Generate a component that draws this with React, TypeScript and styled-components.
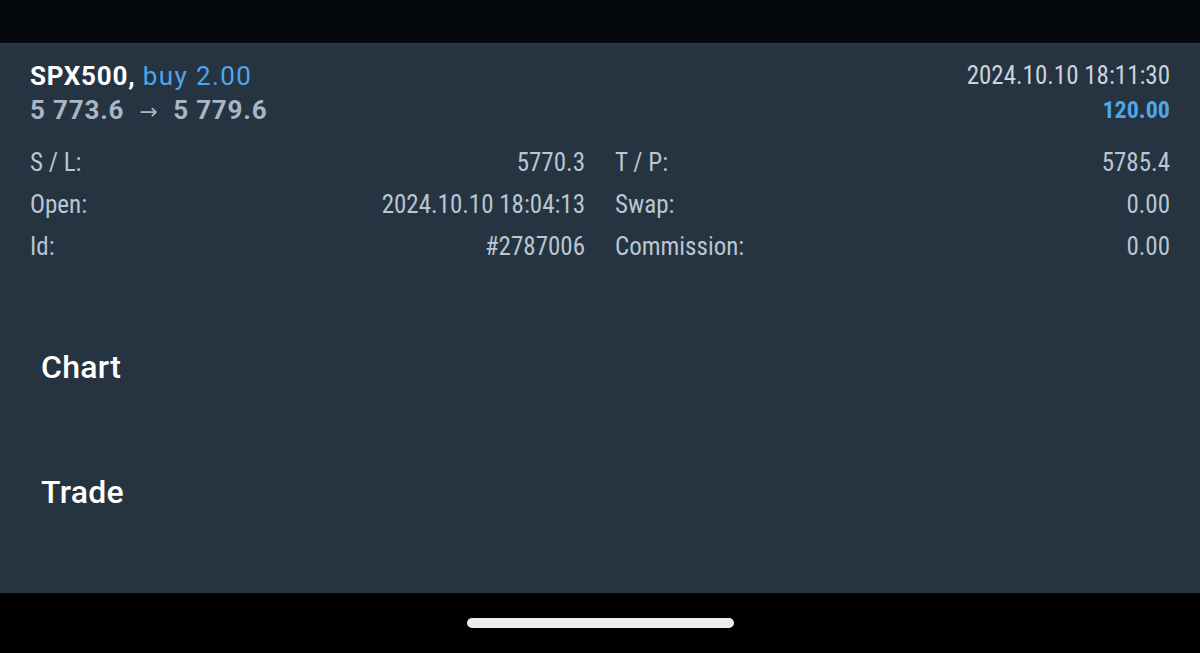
import styled, { createGlobalStyle } from 'styled-components';

const GlobalStyle = createGlobalStyle`
  html, body {
    margin: 0;
    padding: 0;
    background: #000000;
  }
`;

const narrow = `"Liberation Sans Narrow", "Roboto Condensed", "Roboto", sans-serif`;

const position = {
  symbol: 'SPX500',
  side: 'buy',
  volume: '2.00',
  openPrice: '5 773.6',
  currentPrice: '5 779.6',
  time: '2024.10.10 18:11:30',
  profit: '120.00',
};

const details: [string, string, string, string][] = [
  ['S / L:', '5770.3', 'T / P:', '5785.4'],
  ['Open:', '2024.10.10 18:04:13', 'Swap:', '0.00'],
  ['Id:', '#2787006', 'Commission:', '0.00'],
];

const menu = ['Chart', 'Trade'];

const App = () => {
  return (
    <>
      <GlobalStyle />
      <Screen>
        <StatusBar />
        <Panel>
          <HeaderRow>
            <HeaderLeft>
              <SymbolLine>
                <Symbol>{position.symbol},</Symbol> <Side>{position.side} {position.volume}</Side>
              </SymbolLine>
              <PriceLine>
                {position.openPrice} <Arrow>→</Arrow> {position.currentPrice}
              </PriceLine>
            </HeaderLeft>
            <HeaderRight>
              <TimeText>{position.time}</TimeText>
              <Profit>{position.profit}</Profit>
            </HeaderRight>
          </HeaderRow>

          <DetailsGrid>
            {details.map(([l1, v1, l2, v2]) => (
              <DetailRow key={l1}>
                <DetailCell>
                  <Label>{l1}</Label>
                  <Value>{v1}</Value>
                </DetailCell>
                <DetailCell>
                  <Label>{l2}</Label>
                  <Value>{v2}</Value>
                </DetailCell>
              </DetailRow>
            ))}
          </DetailsGrid>

          <Menu>
            {menu.map((item) => (
              <MenuItem key={item}>{item}</MenuItem>
            ))}
          </Menu>
        </Panel>
        <NavBar>
          <HomeIndicator />
        </NavBar>
      </Screen>
    </>
  );
};

export default App;

const Screen = styled.div`
  width: 1200px;
  height: 653px;
  display: flex;
  flex-direction: column;
  background: #000000;
  overflow: hidden;
`;

const StatusBar = styled.div`
  height: 43px;
  flex-shrink: 0;
  background: #05080c;
`;

const Panel = styled.div`
  flex: 1;
  background: #263340;
  border-top: 1px solid #2f3c49;
  padding: 15px 30px 0 30px;
  display: flex;
  flex-direction: column;
`;

const HeaderRow = styled.div`
  display: flex;
  justify-content: space-between;
  align-items: flex-start;
`;

const HeaderLeft = styled.div`
  display: flex;
  flex-direction: column;
  font-family: 'Roboto', sans-serif;
  font-size: 26px;
  line-height: 34px;
  letter-spacing: 0.8px;
  white-space: pre;
`;

const SymbolLine = styled.div``;

const Symbol = styled.span`
  color: #ffffff;
  font-weight: 700;
`;

const Side = styled.span`
  color: #4ea6ec;
  font-weight: 400;
  letter-spacing: 1.4px;
`;

const PriceLine = styled.div`
  color: #a8b6c6;
  font-weight: 700;
`;

const Arrow = styled.span`
  font-family: 'DejaVu Sans', sans-serif;
  font-weight: 400;
  font-size: 22px;
  letter-spacing: 0;
  padding: 0 8px;
`;

const HeaderRight = styled.div`
  display: flex;
  flex-direction: column;
  align-items: flex-end;
  font-family: ${narrow};
  font-size: 25px;
  line-height: 34px;
`;

const TimeText = styled.div`
  color: #cbd4de;
`;

const Profit = styled.div`
  color: #4ea6ec;
  font-weight: 700;
  font-size: 24px;
`;

const DetailsGrid = styled.div`
  margin-top: 12px;
  display: flex;
  flex-direction: column;
`;

const DetailRow = styled.div`
  display: grid;
  grid-template-columns: 1fr 1fr;
  column-gap: 30px;
  height: 42px;
  align-items: center;
`;

const DetailCell = styled.div`
  display: flex;
  justify-content: space-between;
  font-family: ${narrow};
  font-size: 25px;
  color: #bac6d3;
`;

const Label = styled.span``;

const Value = styled.span``;

const Menu = styled.div`
  margin-top: 37px;
  display: flex;
  flex-direction: column;
`;

const MenuItem = styled.div`
  height: 125px;
  display: flex;
  align-items: center;
  padding-left: 11px;
  font-family: 'Roboto', sans-serif;
  font-weight: 500;
  font-size: 32px;
  letter-spacing: 0.3px;
  color: #ffffff;
`;

const NavBar = styled.div`
  height: 60px;
  flex-shrink: 0;
  background: #000000;
  display: flex;
  align-items: center;
  justify-content: center;
`;

const HomeIndicator = styled.div`
  width: 267px;
  height: 10px;
  border-radius: 5px;
  background: #ececec;
`;
